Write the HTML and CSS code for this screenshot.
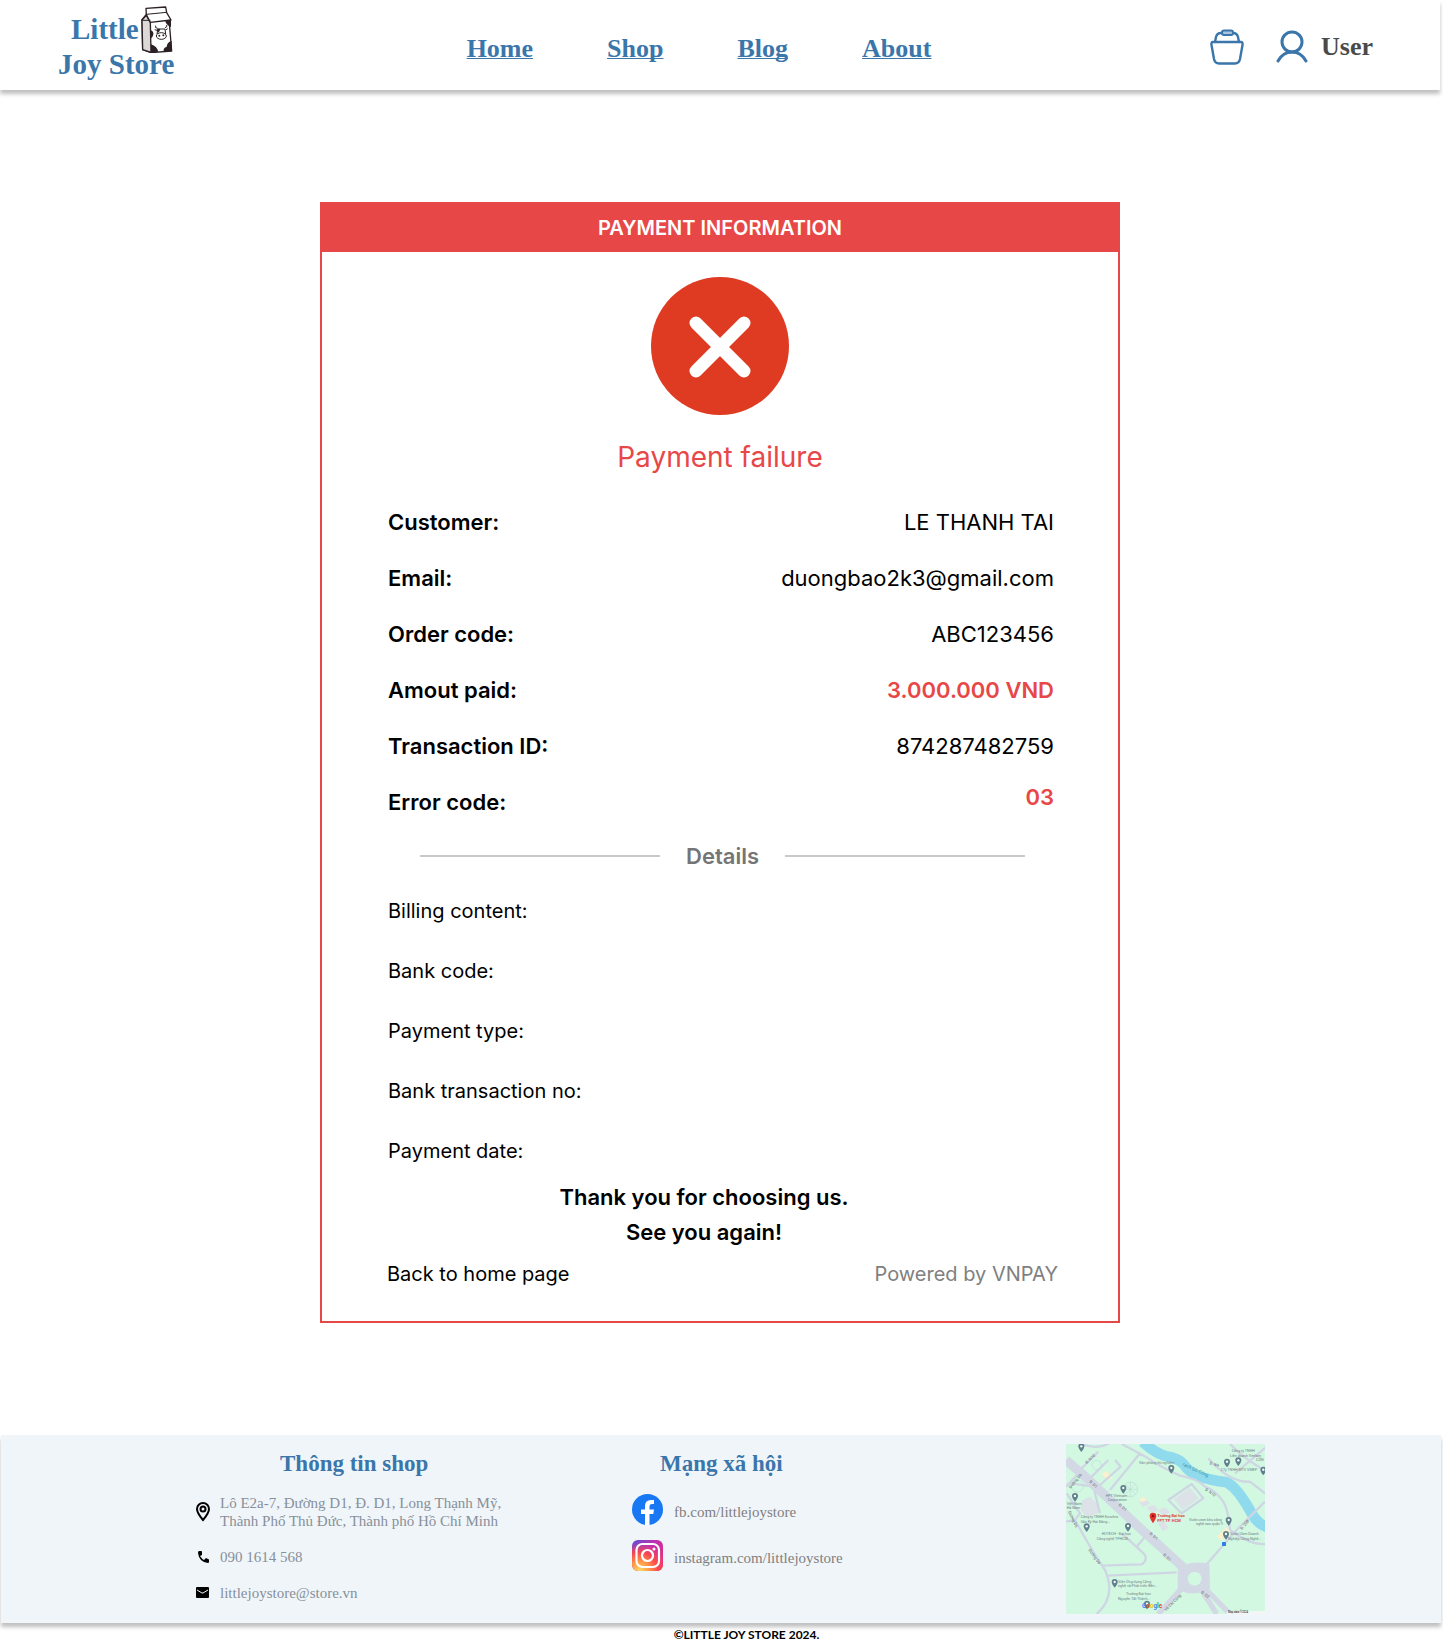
FILE: index.html
```html
<!DOCTYPE html>
<html lang="en">
<head>
<meta charset="utf-8">
<meta name="viewport" content="width=device-width, initial-scale=1">
<title>Little Joy Store - Payment information</title>
<link rel="stylesheet" href="styles.css">
</head>
<body>
<header class="site-header">
  <a class="logo" href="#">
    <span class="logo-line">Little
      <svg class="logo-milk" width="32" height="47" viewBox="300 15 96 141" aria-hidden="true">
        <path d="M303 56L316 40L384 54L392 150L330 155L305 146Z" fill="#fff" stroke="#2b2023" stroke-width="4" stroke-linejoin="round"/>
        <path d="M303 57L316 43L328 64L330 154L305 146Z" fill="#dcd8d8" stroke="#2b2023" stroke-width="4" stroke-linejoin="round"/>
        <path d="M316 41L315 22L374 18L377 35L390 57L328 64Z" fill="#fff" stroke="#2b2023" stroke-width="4" stroke-linejoin="round"/>
        <path d="M316 40L377 34M303 58H328" fill="none" stroke="#2b2023" stroke-width="3"/>
        <path d="M372 58L390 56V78Q376 74 372 58ZM330 88Q343 94 333 110H330ZM330 130Q348 136 352 152L330 154ZM392 120Q378 124 377 137Q366 140 368 151L392 150Z" fill="#2b2023"/>
        <path d="M350 82Q341 82 344 74M372 80Q380 79 377 72M350 84H372L374 100H348ZM348 88L341 86M374 87L380 83" fill="none" stroke="#2b2023" stroke-width="3"/>
        <ellipse cx="361" cy="105" rx="15" ry="10" fill="#fff" stroke="#2b2023" stroke-width="3"/>
        <path d="M350 83L358 84L354 94H349Z" fill="#2b2023"/>
        <circle cx="355" cy="104" r="3" fill="#2b2023"/><circle cx="367" cy="103" r="3" fill="#2b2023"/>
      </svg>
    </span>
    <span class="logo-line">Joy Store</span>
  </a>
  <nav class="main-nav">
    <a href="#">Home</a>
    <a href="#">Shop</a>
    <a href="#">Blog</a>
    <a href="#">About</a>
  </nav>
  <div class="account">
    <a class="cart" href="#" aria-label="Cart">
      <svg width="34" height="36" viewBox="0 0 34 36" fill="none" stroke="#3b76ab" stroke-width="2.400" stroke-linejoin="round" aria-hidden="true">
        <path d="M3 13H31Q33 13 32.500 16L30 30Q29 34.500 25 34.500H9Q5 34.500 4 30L1.500 16Q1 13 3 13Z"/>
        <path d="M5 13L6 8Q7 4 11 4H23Q27 4 28 8L29 13"/>
        <rect x="12" y="1.500" width="11" height="4.500" rx="2" fill="#a9c4dc" stroke-width="2"/>
      </svg>
    </a>
    <a class="user" href="#">
      <svg width="34" height="34" viewBox="0 0 34 34" fill="none" stroke="#3b76ab" stroke-width="3" stroke-linecap="round" aria-hidden="true">
        <circle cx="17" cy="12" r="10"/>
        <path d="M3 31Q8 22 17 22Q26 22 31 31"/>
      </svg>
      <span>User</span>
    </a>
  </div>
</header>

<main class="page">
  <section class="receipt">
    <h1 class="receipt-title">PAYMENT INFORMATION</h1>
    <svg class="status-icon" width="138" height="138" viewBox="0 0 138 138" aria-hidden="true">
      <circle cx="69" cy="69" r="69" fill="#df3a22"/>
      <path d="M45 46L93 94M93 46L45 94" stroke="#fff" stroke-width="13" stroke-linecap="round"/>
    </svg>
    <p class="status-text">Payment failure</p>

    <dl class="summary">
      <div class="row"><dt>Customer:</dt><dd>LE THANH TAI</dd></div>
      <div class="row"><dt>Email:</dt><dd>duongbao2k3@gmail.com</dd></div>
      <div class="row"><dt>Order code:</dt><dd>ABC123456</dd></div>
      <div class="row"><dt>Amout paid:</dt><dd class="alert">3.000.000 VND</dd></div>
      <div class="row"><dt>Transaction ID:</dt><dd>874287482759</dd></div>
      <div class="row"><dt>Error code:</dt><dd class="alert error-value">03</dd></div>
    </dl>

    <h2 class="divider">Details</h2>

    <dl class="details">
      <div class="row"><dt>Billing content:</dt><dd></dd></div>
      <div class="row"><dt>Bank code:</dt><dd></dd></div>
      <div class="row"><dt>Payment type:</dt><dd></dd></div>
      <div class="row"><dt>Bank transaction no:</dt><dd></dd></div>
      <div class="row"><dt>Payment date:</dt><dd></dd></div>
    </dl>

    <p class="thanks">Thank you for choosing us.<br>See you again!</p>

    <div class="receipt-foot">
      <a href="#">Back to home page</a>
      <span class="powered">Powered by VNPAY</span>
    </div>
  </section>
</main>

<footer class="site-footer" lang="vi">
  <section>
    <h2 class="foot-title shop-title">Thông tin shop</h2>
    <ul class="contacts">
      <li>
        <svg width="14" height="20" viewBox="0 0 14 20" fill="none" stroke="#000" stroke-width="2" aria-hidden="true">
          <path d="M7 18Q1 11 1 7A6 6 0 0 1 13 7Q13 11 7 18Z"/><circle cx="7" cy="7" r="2.500"/>
        </svg>
        <span>Lô E2a-7, Đường D1, Đ. D1, Long Thạnh Mỹ,<br>Thành Phố Thủ Đức, Thành phố Hồ Chí Minh</span>
      </li>
      <li>
        <svg width="14" height="14" viewBox="0 0 14 14" aria-hidden="true">
          <path d="M3 1H5Q6 1 6 2L6 5L4 6Q6 9 8 10L10 8L12 9Q13 9 13 10V12Q13 13 12 13Q3 12 2 3Q2 1 3 1Z"/>
        </svg>
        <span>090 1614 568</span>
      </li>
      <li>
        <svg width="14" height="12" viewBox="0 0 14 12" aria-hidden="true">
          <rect width="13" height="11" rx="1"/><path d="M1 3L6 6H7L12 3" fill="none" stroke="#f0f5f9"/>
        </svg>
        <span>littlejoystore@store.vn</span>
      </li>
    </ul>
  </section>
  <section>
    <h2 class="foot-title social-title">Mạng xã hội</h2>
    <ul class="socials">
      <li><a href="#">
        <svg width="31" height="31" viewBox="0 0 31 31" aria-hidden="true">
          <circle cx="15.500" cy="15.500" r="15.500" fill="#1877f2"/>
          <path d="M13 31V20H9V15.500H13V12Q13 6 19 6H22V10H20Q17.500 10 17.500 12.500V15.500H22L21.300 20H17.500V31Z" fill="#fff"/>
        </svg>
        <span>fb.com/littlejoystore</span></a></li>
      <li><a href="#">
        <svg width="31" height="31" viewBox="0 0 31 31" aria-hidden="true">
          <defs>
            <linearGradient id="ig-base" x1="0" y1="0" x2="1" y2="1"><stop offset="0" stop-color="#5b4fd6"/><stop offset=".4" stop-color="#c22fb0"/><stop offset="1" stop-color="#f02f70"/></linearGradient>
            <radialGradient id="ig-warm" cx=".25" cy="1" r=".9"><stop offset="0" stop-color="#ffdc65"/><stop offset=".3" stop-color="#ffa04a"/><stop offset=".65" stop-color="#fb4a4d"/><stop offset="1" stop-color="#fb4a4d" stop-opacity="0"/></radialGradient>
          </defs>
          <rect width="31" height="31" rx="6" fill="url(#ig-base)"/>
          <rect width="31" height="31" rx="6" fill="url(#ig-warm)"/>
          <g fill="none" stroke="#fff" stroke-width="2.200"><rect x="4.500" y="4" width="22.500" height="23" rx="6"/><circle cx="15.500" cy="15.500" r="5.500"/></g>
          <circle cx="22" cy="9" r="1.500" fill="#fff"/>
        </svg>
        <span>instagram.com/littlejoystore</span></a></li>
    </ul>
  </section>
  <svg class="map" width="199" height="170" viewBox="48 42 597 510" role="img" aria-label="Map">
    <defs>
      <g id="poi"><path d="M0 14Q-9 3-9-3A9 9 0 0 1 9-3Q9 3 0 14Z" fill="#5f7f8c"/><circle cy="-3" r="3.500" fill="#fff"/></g>
    </defs>
    <rect x="48" y="42" width="597" height="510" fill="#d3f8e2"/>
    <g fill="#dde1e8">
      <path d="M95 212L120 200L145 225V250L110 260L92 240Z"/>
      <path d="M268 215l20-8 12 14-22 10zM290 232l22-8 14 16-22 10zM326 240l20-8 14 16-22 10zM324 280l18-6 14 20-18 10z"/>
      <path d="M372 207L420 173L446 205L398 240Z"/>
    </g>
    <path d="M155 132l14-8 18 20-14 6zM268 207l14-6 8 10-14 6zM500 320l30-28 10 12-24 26z" fill="#fdf0cc"/>
    <path d="M278 36Q325 78 365 82Q395 90 408 112Q435 145 530 157Q562 172 605 250Q625 285 655 292" fill="none" stroke="#90daee" stroke-width="32"/>
    <g fill="none" stroke="#cfd6e3" stroke-width="7" stroke-linejoin="round">
      <path d="M95 42Q150 65 195 28M90 120L145 65M120 145L175 90M150 165L212 110L195 90M180 180L270 70M215 42L290 82Q330 110 390 137Q440 145 465 170Q495 180 520 215Q535 240 540 300M540 42Q580 85 650 125M555 130L650 50M475 85Q540 160 600 155L645 190M645 215L560 300L468 405M540 300Q600 345 645 342M48 170L100 115M60 160L130 170L150 250M50 190L90 250L75 270M75 270Q130 370 165 420Q200 500 140 552M155 407L275 403Q300 385 275 365L215 310M175 437L380 427M48 275L75 270M260 350L285 320M355 210L425 162L460 205L395 250Z"/>
    </g>
    <path d="M48 90Q70 110 100 135L260 285L400 412" fill="none" stroke="#d2d8e4" stroke-width="28"/>
    <path d="M400 470L325 552M460 470L540 552M455 480L500 552" fill="none" stroke="#d2d8e4" stroke-width="16"/>
    <path d="M383 412Q430 390 478 402L480 475Q430 505 383 478Z" fill="#d2d8e4"/>
    <circle cx="434" cy="446" r="21" fill="#d3f8e2"/>
    <g fill="none" stroke="#b9ddd3" stroke-width="2"><circle cx="241" cy="178" r="22"/><path d="M219 178H263M241 156V200M226 163L256 193M256 163L226 193"/><circle cx="82" cy="168" r="18"/><circle cx="140" cy="105" r="14"/></g>
    <g class="map-label">
      <text x="545" y="66">Công ty TNHH</text><text x="540" y="80">Liên doanh Vietlam</text>
      <text x="267" y="102">Văn phòng thí nghiệm</text><text x="512" y="122">CTy TNHH MTV VMEP</text>
      <text x="618" y="94">CÔN</text><text x="167" y="200">HPT Vietnam</text><text x="173" y="214">Corporation</text>
      <text x="50" y="224">Việt Nam</text><text x="50" y="238">Hà Nam</text>
      <text x="92" y="264">Công ty TNHH Eurofins</text><text x="92" y="278">Sắc Ký Hải Đăng...</text>
      <text x="155" y="315">HUTECH - Đại học</text><text x="140" y="329">Công nghệ TPHCM...</text>
      <text x="417" y="272">Vườn ươm khu công</text><text x="438" y="286">nghệ cao quận 9</text>
      <text x="540" y="315">Vườn Ươm Doanh</text><text x="534" y="329">Nghiệp Công Nghệ...</text>
      <text x="204" y="458">Viện Ứng dụng Công</text><text x="204" y="472">nghệ và Phát triển Bền...</text>
      <text x="228" y="495">Trường Đại học</text><text x="204" y="509">Nguyễn Tất Thành...</text>
    </g>
    <g class="map-road">
      <text transform="translate(117 156) rotate(42)">Đ. D1</text><text transform="translate(205 226) rotate(42)">Đ. D1</text><text transform="translate(298 312) rotate(42)">Đ. D1</text><text transform="translate(338 376) rotate(42)">Đ. D1</text>
      <text transform="translate(110 102) rotate(-42)">Đ. N10</text><text transform="translate(464 180) rotate(35)">Đ. N10</text><text transform="translate(478 102) rotate(20)">Đ. N9</text><text transform="translate(576 300) rotate(-50)">Đ. 20B</text>
      <text transform="translate(115 360) rotate(55)">Đường D6</text><text transform="translate(54 245) rotate(65)">Đường D6</text><text transform="translate(62 176) rotate(-50)">Đường D6</text><text transform="translate(348 544) rotate(-45)">Võ Chí Công</text><text transform="translate(452 488) rotate(38)">Đ. D2</text>
    </g>
    <text class="map-river" transform="translate(397 106) rotate(25)">rạch Gò Công</text>
    <use href="#poi" x="94" y="52"/><use href="#poi" x="364" y="117"/><use href="#poi" x="531" y="98"/><use href="#poi" x="565" y="94"/><use href="#poi" x="640" y="122"/><use href="#poi" x="220" y="177"/><use href="#poi" x="75" y="201"/><use href="#poi" x="110" y="292"/><use href="#poi" x="234" y="291"/><use href="#poi" x="536" y="273"/><use href="#poi" x="528" y="315"/><use href="#poi" x="194" y="459"/><use href="#poi" x="291" y="524"/>
    <rect x="516" y="336" width="12" height="12" rx="2" fill="#2b7de9"/>
    <path d="M309 280Q299 265 299 258A10 10 0 0 1 319 258Q319 265 309 280Z" fill="#e5322d"/><circle cx="309" cy="258" r="4" fill="#8f1512"/>
    <g class="map-pin"><text x="322" y="262">Trường Đại học</text><text x="322" y="275">FPT TP. HCM</text></g>
    <text class="map-brand" x="276" y="534"><tspan fill="#4285f4">G</tspan><tspan fill="#ea4335">o</tspan><tspan fill="#fbbc05">o</tspan><tspan fill="#4285f4">g</tspan><tspan fill="#34a853">l</tspan><tspan fill="#ea4335">e</tspan></text>
    <rect x="530" y="543" width="115" height="9" fill="#f3f6f5"/>
    <text class="map-credit" x="534" y="550">Map data ©2024</text>
  </svg>
</footer>
<p class="copyright">©LITTLE JOY STORE 2024.</p>
</body>
</html>
```
FILE: styles.css
```css
* {
  box-sizing: border-box;
}

body,
h1,
h2,
p,
dl,
dd,
ul {
  margin: 0;
  padding: 0;
}

body {
  background: #fff;
  color: #000;
  font-family: Inter, "Liberation Sans", sans-serif;
}

ul {
  list-style: none;
}

a {
  color: inherit;
  text-decoration: none;
}

svg {
  display: block;
  flex: none;
}

/* Header */
.site-header {
  display: flex;
  align-items: center;
  justify-content: space-between;
  height: 90px;
  margin-right: 3px;
  padding: 4px 67px 0 58px;
  background: #fff;
  box-shadow: 0 4px 4px rgba(0, 0, 0, 0.25);
  color: #3b76ab;
  font-family: "Liberation Serif", serif;
  font-size: 26px;
  font-weight: 700;
}

.logo {
  width: 130px;
  font-size: 29px;
}

.logo-line {
  display: flex;
  align-items: center;
  gap: 2px;
  height: 35px;
  line-height: 35px;
  white-space: nowrap;
}

.logo-line:first-child {
  padding-left: 13px;
}

.main-nav {
  display: flex;
  gap: 74px;
  padding-top: 4px;
}

.main-nav a {
  text-decoration: underline;
  text-decoration-thickness: 1px;
  text-decoration-skip-ink: none;
}

.account,
.user {
  display: flex;
  align-items: center;
}

.account {
  gap: 31px;
}

.user {
  gap: 12px;
  color: #4a4a4a;
}

/* Receipt */
.page {
  margin-right: 3px;
  padding: 112px 24px;
}

.receipt {
  max-width: 800px;
  margin: 0 auto;
  border: 2px solid #e84747;
}

.receipt-title {
  background: #e84747;
  color: #fff;
  font-size: 20px;
  font-weight: 600;
  line-height: 48px;
  text-align: center;
}

.status-icon {
  margin: 25px auto;
}

.status-text {
  color: #e84747;
  font-size: 28px;
  line-height: 34px;
  text-align: center;
}

.summary,
.details {
  display: flex;
  flex-direction: column;
  padding: 0 64px 0 66px;
}

.summary {
  gap: 28px;
  margin-top: 34px;
  font-size: 22px;
  line-height: 28px;
}

.row {
  display: flex;
  justify-content: space-between;
}

.summary dt,
.alert {
  font-weight: 600;
}

.alert {
  color: #e84747;
}

.error-value {
  line-height: 18px;
}

.divider {
  display: flex;
  align-items: center;
  gap: 26px;
  margin: 26px 93px 29px 98px;
  color: #757575;
  font-size: 22px;
  font-weight: 600;
  line-height: 28px;
}

.divider::before,
.divider::after {
  content: "";
  flex: 1;
  height: 2px;
  background: #c9c9c9;
}

.details {
  gap: 36px;
  font-size: 20px;
  line-height: 24px;
}

.thanks {
  margin-top: 17px;
  padding-right: 32px;
  font-size: 22px;
  font-weight: 600;
  line-height: 35px;
  text-align: center;
}

.receipt-foot {
  display: flex;
  justify-content: space-between;
  padding: 12px 60px 35px 65px;
  font-size: 20px;
  line-height: 24px;
}

.powered {
  color: #808080;
}

/* Footer */
.site-footer {
  display: grid;
  grid-template-columns: 436fr 434fr 199px;
  margin: 0 2px 0 1px;
  padding: 9px 176px 9px 195px;
  background: #f0f5f9;
  box-shadow: 0 4px 4px rgba(0, 0, 0, 0.25);
  font-family: "Liberation Serif", serif;
  font-size: 15px;
  line-height: 18px;
}

.foot-title {
  padding-top: 6px;
  color: #3b76ab;
  font-size: 23px;
  line-height: 28px;
}

.shop-title {
  padding-left: 84px;
}

.social-title {
  padding-left: 28px;
}

.contacts,
.socials {
  display: flex;
  flex-direction: column;
  padding-top: 16px;
}

.contacts {
  gap: 18px;
  color: #87909a;
}

.contacts li {
  display: flex;
  align-items: center;
  gap: 10px;
}

.socials {
  gap: 15px;
  color: #808080;
}

.socials a {
  display: flex;
  align-items: center;
  gap: 11px;
}

.socials span {
  padding-top: 4px;
}

.map-label {
  fill: #6f8187;
  font-family: Roboto, sans-serif;
  font-size: 11px;
}

.map-road {
  fill: #5d6770;
  font-family: Roboto, sans-serif;
  font-size: 12px;
}

.map-river {
  fill: #2f8fa8;
  font-family: Roboto, sans-serif;
  font-size: 14px;
}

.map-pin {
  fill: #e0403a;
  font-family: Roboto, sans-serif;
  font-size: 12px;
  font-weight: 700;
}

.map-brand {
  font-family: Roboto, sans-serif;
  font-size: 19px;
  font-weight: 700;
}

.map-credit {
  font-family: Roboto, sans-serif;
  font-size: 8px;
}

.copyright {
  padding-top: 4px;
  padding-left: 50px;
  font-family: Lato, sans-serif;
  font-size: 12px;
  font-weight: 700;
  line-height: 16px;
  text-align: center;
}
```
